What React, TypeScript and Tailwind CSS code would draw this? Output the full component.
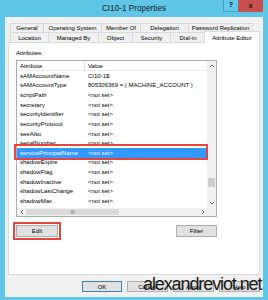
import React from 'react'

const rows: [string, string][] = [
  ['sAMAccountName', 'CI10-1$'],
  ['sAMAccountType', '805306369 = ( MACHINE_ACCOUNT )'],
  ['scriptPath', '<not set>'],
  ['secretary', '<not set>'],
  ['securityIdentifier', '<not set>'],
  ['securityProtocol', '<not set>'],
  ['seeAlso', '<not set>'],
  ['serialNumber', '<not set>'],
  ['servicePrincipalName', '<not set>'],
  ['shadowExpire', '<not set>'],
  ['shadowFlag', '<not set>'],
  ['shadowInactive', '<not set>'],
  ['shadowLastChange', '<not set>'],
  ['shadowMax', '<not set>'],
]

function Chevron({ dir }: { dir: 'up' | 'down' | 'left' | 'right' }) {
  const d = {
    up: 'M1 4 L3 2 L5 4',
    down: 'M1 2 L3 4 L5 2',
    left: 'M4 1 L2 3 L4 5',
    right: 'M2 1 L4 3 L2 5',
  }[dir]
  return (
    <svg width="6" height="6" viewBox="0 0 6 6">
      <path d={d} fill="none" stroke="#606060" strokeWidth="0.9" />
    </svg>
  )
}

function Tab({ label, w, first }: { label: string; w: string; first?: boolean }) {
  return (
    <div
      className={`${w} h-full flex items-center justify-center border-t border-r border-[#d9d9d9] bg-[#f0f0f0] ${
        first ? 'border-l' : ''
      }`}
    >
      {label}
    </div>
  )
}

function Btn({ label, w, primary }: { label: string; w: string; primary?: boolean }) {
  return (
    <div
      className={`${w} flex items-center justify-center bg-[#e1e1e1] border ${
        primary ? 'border-[#3c7fb1]' : 'border-[#adadad]'
      }`}
    >
      {label}
    </div>
  )
}

export default function App() {
  return (
    <div className="relative w-[268px] h-[300px] overflow-hidden bg-[#5fc6e8] flex flex-col text-black font-['Liberation_Sans',Arial,sans-serif]">
      {/* title bar */}
      <div className="h-[17px] grid grid-cols-[1fr_auto_1fr] items-start">
        <div />
        <div className="text-[8.2px] leading-[17px] text-[#1b1b1b]">CI10-1 Properties</div>
        <div className="flex justify-end pr-[5px]">
          <div className="w-[15px] h-[12px] flex items-center justify-center bg-[#63c9ea] border-l border-b border-[#4c9dbd] text-[7px] font-bold">
            ?
          </div>
          <div className="w-[25px] h-[12px] flex items-center justify-center bg-[#c7504f] text-[7.5px] font-bold text-[#2a1010]">
            x
          </div>
        </div>
      </div>

      {/* client area */}
      <div className="mx-[5px] mb-[3px] flex-1 bg-[#f0f0f0] flex flex-col px-[3px] pt-[6px] text-[6px] leading-[8px]">
        {/* tabs */}
        <div className="pl-[2px]">
          <div className="flex h-[9px]">
            <Tab label="General" w="w-[34px]" first />
            <Tab label="Operating System" w="w-[58px]" />
            <Tab label="Member Of" w="w-[39px]" />
            <Tab label="Delegation" w="w-[48px]" />
            <Tab label="Password Replication" w="w-[64px]" />
          </div>
          <div className="flex h-[10px] items-end">
            <Tab label="Location" w="w-[39px]" first />
            <Tab label="Managed By" w="w-[50px]" />
            <Tab label="Object" w="w-[34px]" />
            <Tab label="Security" w="w-[38px]" />
            <Tab label="Dial-in" w="w-[35px]" />
            <div className="relative z-10 -ml-[2px] -mb-px w-[56px] h-[12px] flex items-center justify-center bg-white border-t border-l border-r border-[#d9d9d9]">
              Attribute Editor
            </div>
          </div>
        </div>

        {/* panel */}
        <div className="h-[233px] border border-[#d9d9d9] bg-white pt-[6px] pl-[7px] flex flex-col">
          <div>Attributes:</div>
          <div className="mt-[3px] w-[201px] h-[157px] border border-[#abadb3] flex flex-col">
            <div className="flex flex-1 min-h-0">
              <div className="flex-1 overflow-hidden">
                <div className="h-[10px] flex items-center border-b border-[#eaeaea]">
                  <div className="w-[68px] h-full flex items-center pl-[3px] border-r border-[#e0e0e0]">Attribute</div>
                  <div className="pl-[3px]">Value</div>
                </div>
                {rows.map(([a, v]) => {
                  const sel = a === 'servicePrincipalName'
                  return (
                    <div
                      key={a}
                      className={`h-[9.64px] flex items-center whitespace-nowrap ${
                        sel ? 'bg-[#3399ff] text-white' : ''
                      }`}
                    >
                      <div className="w-[68px] shrink-0 pl-[3px]">{a}</div>
                      <div className="pl-[3px]">{v}</div>
                    </div>
                  )
                })}
              </div>
              <div className="w-[9px] bg-[#f0f0f0] flex flex-col">
                <div className="h-[9px] flex items-center justify-center">
                  <Chevron dir="up" />
                </div>
                <div className="flex-1">
                  <div className="mt-[108px] mx-[1px] h-[9px] bg-[#cdcdcd]" />
                </div>
                <div className="h-[10px] flex items-center justify-center">
                  <Chevron dir="down" />
                </div>
              </div>
            </div>
            <div className="flex h-[8px]">
              <div className="flex-1 flex bg-[#f0f0f0]">
                <div className="w-[9px] flex items-center justify-center">
                  <Chevron dir="left" />
                </div>
                <div className="w-[93px] my-[1px] bg-[#dadada] flex items-center justify-center text-[5px] leading-none text-[#606060]">
                  III
                </div>
                <div className="flex-1" />
                <div className="w-[9px] flex items-center justify-center">
                  <Chevron dir="right" />
                </div>
              </div>
              <div className="w-[9px] bg-[#f0f0f0]" />
            </div>
          </div>
          <div className="mt-[8px] w-[201px] h-[12px] flex justify-between">
            <Btn label="Edit" w="w-[42px]" />
            <Btn label="Filter" w="w-[41px]" />
          </div>
        </div>

        {/* dialog buttons */}
        <div className="mt-[6px] h-[11px] flex justify-end gap-[5px]">
          <Btn label="OK" w="w-[40px]" primary />
          <Btn label="Cancel" w="w-[41px]" />
          <Btn label="Apply" w="w-[41px]" />
          <Btn label="Help" w="w-[41px]" />
        </div>
      </div>

      {/* annotations */}
      <div className="absolute left-[14px] top-[144px] w-[194px] h-[16px] border-2 border-[#e5443f]" />
      <div className="absolute left-[13px] top-[222px] w-[48px] h-[18px] border-2 border-[#e5443f]" />

      {/* watermark */}
      <div className="absolute left-[143px] top-[275px] text-[18px] leading-[18px] tracking-[-1.1px] text-[#1a1a1a] whitespace-nowrap">
        alexandreviot.net
      </div>
    </div>
  )
}
